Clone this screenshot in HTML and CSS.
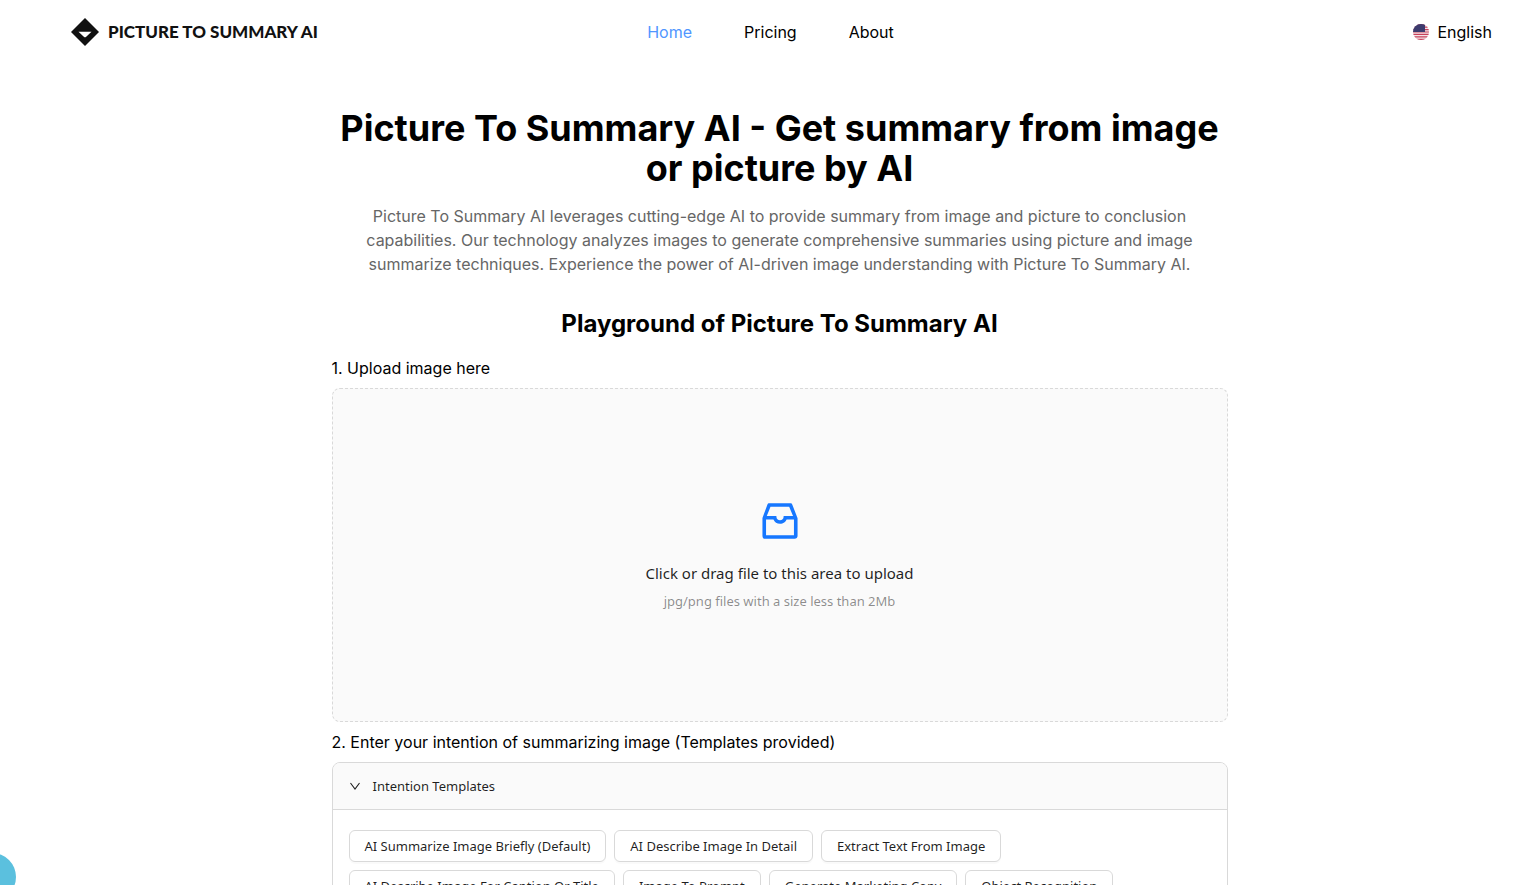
FILE: index.html
```html
<!DOCTYPE html>
<html lang="en">
<head>
  <meta charset="UTF-8">
  <title>Picture To Summary AI</title>
  <meta name="viewport" content="width=device-width, initial-scale=1.0">
  <link rel="stylesheet" href="styles.css">
</head>
<body>
  <header class="header">
    <div class="header-side">
      <a class="logo" href="#">
        <svg class="logo-mark" viewBox="0 0 28 28" aria-hidden="true">
          <path d="M14 0L28 14L14 28L0 14Z" fill="#111"/>
          <path d="M7.500 13.800H20.500L15.200 18.800Q14 19.800 12.800 18.800Z" fill="#fff"/>
        </svg>
        <span class="logo-text">PICTURE TO SUMMARY AI</span>
      </a>
    </div>
    <nav class="nav">
      <a class="nav-link active" href="#">Home</a>
      <a class="nav-link" href="#">Pricing</a>
      <a class="nav-link" href="#">About</a>
    </nav>
    <div class="header-side header-right">
      <button class="lang-btn" type="button">
        <svg class="flag" viewBox="0 0 16 16" aria-hidden="true">
          <defs><clipPath id="round"><circle cx="8" cy="8" r="8"/></clipPath></defs>
          <g clip-path="url(#round)">
            <rect width="16" height="16" fill="#f3e4e8"/>
            <path d="M0 .6H16M0 3.100H16M0 5.600H16M0 8H16M0 10.400H16M0 12.900H16M0 15.400H16" stroke="#c8405a" stroke-width="1.200"/>
            <rect width="12" height="8" fill="#3c3b6e"/>
          </g>
        </svg>
        English
      </button>
    </div>
  </header>

  <main class="main">
    <div class="container">
      <h1 class="title">Picture To Summary AI - Get summary from image or picture by AI</h1>
      <p class="intro">Picture To Summary AI leverages cutting-edge AI to provide summary from image and picture to conclusion capabilities. Our technology analyzes images to generate comprehensive summaries using picture and image summarize techniques. Experience the power of AI-driven image understanding with Picture To Summary AI.</p>
      <h2 class="subtitle">Playground of Picture To Summary AI</h2>

      <div class="step">1. Upload image here</div>
      <button class="upload" type="button">
        <svg class="upload-icon" viewBox="0 0 1024 1024" fill="currentColor" aria-hidden="true">
          <path d="M885.2 446.3l-.2-.8-112.2-285.1c-5-16.1-19.9-27.2-36.8-27.2H281.2c-17 0-32.1 11.3-36.9 27.6L139.4 443l-.3.7-.2.8c-1.3 4.9-1.7 9.9-1 14.8-.1 1.6-.2 3.2-.2 4.8V830a60.9 60.9 0 0 0 60.8 60.8h627.2c33.5 0 60.8-27.3 60.9-60.8V464.1c0-1.3 0-2.6-.1-3.7.4-4.9 0-9.6-1.3-14.1zm-295.8-43l-.3 15.7c-.8 44.9-31.8 75.1-77.1 75.1-22.1 0-41.1-7.1-54.8-20.6S436 441.2 435.6 419l-.3-15.7H229.5L309 210h399.2l81.7 193.3H589.4zm-375 76.8h157.3c24.3 57.1 76 90.8 140.4 90.8 33.7 0 65-9.4 90.3-27.2 22.2-15.6 39.5-37.4 50.7-63.6h156.5V814H214.4V480.1z"/>
        </svg>
        <span class="upload-text">Click or drag file to this area to upload</span>
        <span class="upload-hint">jpg/png files with a size less than 2Mb</span>
      </button>

      <div class="step">2. Enter your intention of summarizing image (Templates provided)</div>
      <section class="panel">
        <button class="panel-header" type="button" aria-expanded="true">
          <svg class="arrow" viewBox="0 0 12 12" aria-hidden="true">
            <path d="M1.500 3L6 9L10.500 3" fill="none" stroke="currentColor" stroke-width="1.100"/>
          </svg>
          Intention Templates
        </button>
        <div class="panel-body">
          <button class="tpl-btn" type="button">AI Summarize Image Briefly (Default)</button>
          <button class="tpl-btn" type="button">AI Describe Image In Detail</button>
          <button class="tpl-btn" type="button">Extract Text From Image</button>
          <button class="tpl-btn" type="button">AI Describe Image For Caption Or Title</button>
          <button class="tpl-btn" type="button">Image To Prompt</button>
          <button class="tpl-btn" type="button">Generate Marketing Copy</button>
          <button class="tpl-btn" type="button">Object Recognition</button>
        </div>
      </section>
    </div>
  </main>

  <button class="bubble" type="button" aria-label="Open widget"></button>
</body>
</html>
```
FILE: styles.css
```css
* {
  box-sizing: border-box;
}
html, body {
  margin: 0;
  height: 100%;
  overflow: hidden;
}
body {
  font-family: Inter, Arial, sans-serif;
  font-size: 16px;
  line-height: 24px;
  color: #000;
  background: #fff;
}
button {
  font: inherit;
  color: inherit;
  cursor: pointer;
}
a {
  color: inherit;
  text-decoration: none;
}

.header {
  display: flex;
  align-items: center;
  height: 64px;
  padding: 0 48px 0 71px;
}
.header-side {
  flex: 1 1 0;
  display: flex;
}
.header-right {
  justify-content: flex-end;
  margin-left: 22px;
}
.logo {
  display: flex;
  align-items: center;
  gap: 9px;
}
.logo-mark {
  width: 28px;
  height: 28px;
}
.logo-text {
  font-family: Lato, Arial, sans-serif;
  font-size: 17px;
  font-weight: 900;
  color: #111;
  white-space: nowrap;
}
.nav {
  display: flex;
  gap: 52px;
}
.nav-link.active {
  color: #5096ff;
}
.lang-btn {
  display: flex;
  align-items: center;
  gap: 8px;
  padding: 0;
  border: none;
  background: none;
}
.flag {
  width: 16px;
  height: 16px;
}

.main {
  padding: 44px 0 0 19px;
}
.container {
  max-width: 896px;
  margin: 0 auto;
}
.title {
  margin: 0;
  font-size: 36px;
  line-height: 40px;
  font-weight: 700;
  text-align: center;
}
.intro {
  margin: 16px 32px 0;
  color: #666;
  text-align: center;
}
.subtitle {
  margin: 32px 0 16px;
  font-size: 24px;
  line-height: 32px;
  font-weight: 700;
  text-align: center;
}
.step {
  margin: 8px 0;
}

.upload {
  display: flex;
  flex-direction: column;
  align-items: center;
  justify-content: center;
  width: 100%;
  min-height: 334px;
  padding: 16px;
  border: 1px dashed #d9d9d9;
  border-radius: 8px;
  background: #fafafa;
  font-family: "Noto Sans", "Open Sans", sans-serif;
}
.upload-icon {
  width: 48px;
  height: 48px;
  margin-bottom: 16px;
  color: #1677ff;
}
.upload-text {
  margin-bottom: 4px;
  font-size: 15px;
  color: rgba(0, 0, 0, 0.88);
}
.upload-hint {
  font-size: 13px;
  color: rgba(0, 0, 0, 0.45);
}

.panel {
  border: 1px solid #d9d9d9;
  border-radius: 8px;
  overflow: hidden;
  font-family: "Noto Sans", "Open Sans", sans-serif;
  font-size: 13px;
  color: rgba(0, 0, 0, 0.88);
}
.panel-header {
  display: flex;
  align-items: center;
  gap: 12px;
  width: 100%;
  height: 47px;
  padding: 0 16px;
  border: none;
  border-bottom: 1px solid #d9d9d9;
  background: #fafafa;
}
.arrow {
  width: 12px;
  height: 12px;
}
.panel-body {
  display: flex;
  flex-wrap: wrap;
  gap: 8px;
  padding: 20px 16px;
}
.tpl-btn {
  height: 32px;
  padding: 0 15px;
  border: 1px solid #d9d9d9;
  border-radius: 6px;
  background: #fff;
  box-shadow: 0 2px 0 rgba(0, 0, 0, 0.02);
}

.bubble {
  position: fixed;
  left: -32px;
  bottom: -16px;
  width: 48px;
  height: 48px;
  border: none;
  border-radius: 50%;
  background: #5bc0de;
}
```
